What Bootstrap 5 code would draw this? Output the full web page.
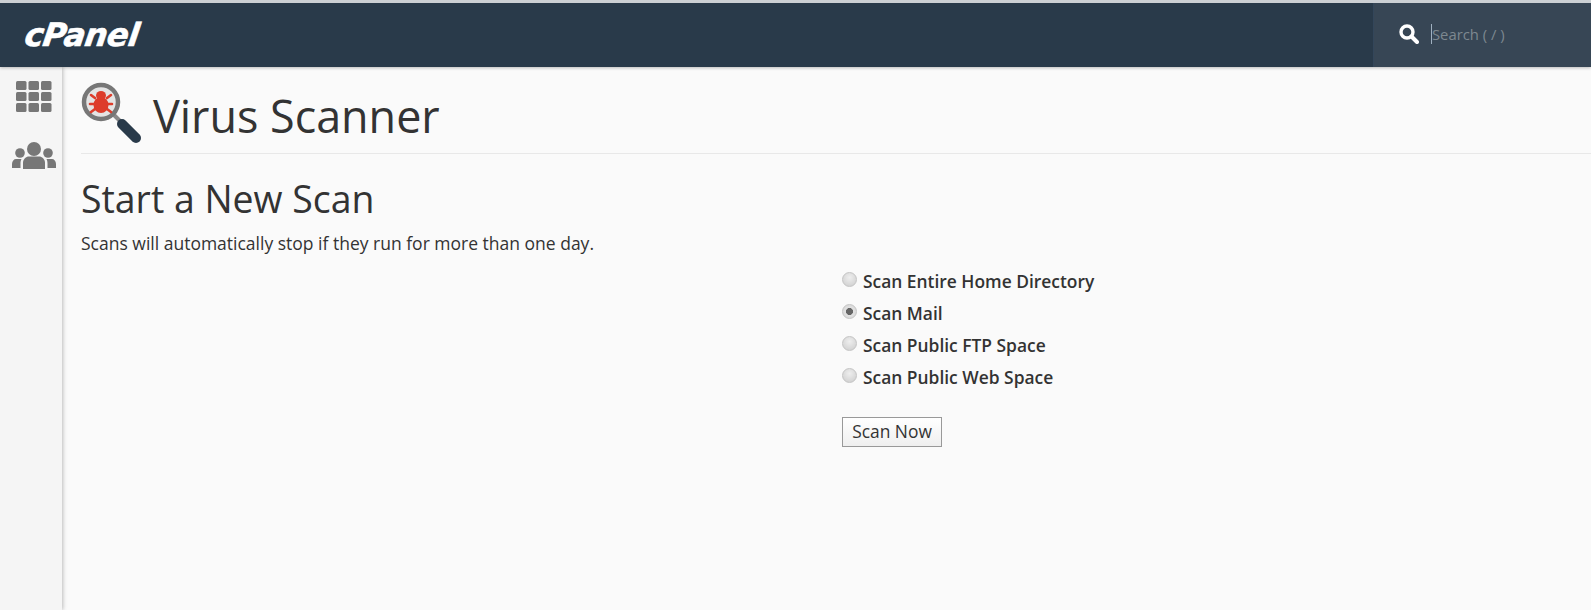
<!DOCTYPE html>
<html lang="en">
<head>
<meta charset="utf-8">
<title>Virus Scanner</title>
<link href="https://cdn.jsdelivr.net/npm/bootstrap@5.3.0/dist/css/bootstrap.min.css" rel="stylesheet">
<style>
html,body{height:100%;overflow:hidden}
body{background:#fafafa;color:#333;font-family:"Open Sans","Noto Sans",sans-serif;font-size:16px}
.topbar{height:67px;background:#293a4a;border-top:3px solid #ccd0d4;box-shadow:0 1px 3px rgba(0,0,0,.25);position:relative;z-index:2}
.brand-logo{font-family:"DejaVu Sans",sans-serif;font-weight:700;font-style:italic;font-size:32px;letter-spacing:-.6px;color:#fff;margin-left:25px;line-height:1;-webkit-text-stroke:.6px #fff;transform:skewX(-8deg)}
.search-box{width:218px;background:#374655;border-left:1px solid #33465a;padding:0 0 2px 25px;gap:12px}
.search-field{background:transparent;border:0;border-left:1px solid #9fb0c0;outline:0;color:#fff;font-size:14.8px;width:150px;height:20px;padding:0;font-family:"Open Sans",sans-serif}
.search-field::placeholder{color:#7d8890;opacity:1}
.page-wrap{height:calc(100% - 67px)}
.side-rail{width:62px;flex:none;background:#f5f5f5;box-shadow:1px 0 4px rgba(0,0,0,.25);padding:14px 0 0 6px;gap:30px}
.main-area{padding:15px 0 0 19px;min-width:0}
.page-head{border-bottom:1px solid #e8e8e8;height:72px;gap:11px}
.page-title{font-size:44.9px;font-weight:400;color:#333;margin:12px 0 0;line-height:1;font-family:"Open Sans",sans-serif}
.sub-title{font-size:37.4px;font-weight:400;color:#333;margin:23px 0 0;line-height:44px}
.intro-text{margin:10px 0 0;font-size:17.5px;line-height:24px;color:#333}
.scan-form{margin:10px 0 0 761px}
.scan-option{display:flex;align-items:center;height:32px;font-weight:600;font-size:17.4px;color:#333;margin:0;gap:6px}
.scan-option input{appearance:none;-webkit-appearance:none;width:15px;height:15px;margin:-4px 0 0;flex:none;border-radius:50%;border:1px solid #c4c4c4;background:radial-gradient(circle at 50% 35%,#eee,#ccc)}
.scan-option input:checked{background:radial-gradient(circle,#666 0,#666 3.2px,#e2e2e2 3.8px,#d4d4d4 100%)}
.scan-btn{margin-top:24px;height:30px;width:100px;padding:0 0 2px;border:1px solid #999;border-radius:0;background:linear-gradient(#fff,#efefef);color:#333;font-size:17.4px;line-height:24px;font-family:"Open Sans",sans-serif}
</style>
</head>
<body>
<header class="topbar d-flex justify-content-between align-items-stretch">
  <div class="brand-logo d-flex align-items-center">cPanel</div>
  <div class="search-box d-flex align-items-center">
    <svg width="20" height="20" viewBox="0 0 20 20" aria-hidden="true"><circle cx="8" cy="8" r="6" fill="none" stroke="#fff" stroke-width="3.400"/><path d="M12.500 12.500 18 18" stroke="#fff" stroke-width="4" stroke-linecap="round"/></svg>
    <input class="search-field" type="text" placeholder="Search ( / )" aria-label="Search">
  </div>
</header>
<div class="page-wrap d-flex">
  <nav class="side-rail d-flex flex-column align-items-center">
    <svg width="36" height="31" viewBox="0 0 36 31" aria-hidden="true"><g fill="#777"><rect x="0" y="0" width="10.500" height="9" rx="1.500"/><rect x="12.500" y="0" width="10.500" height="9" rx="1.500"/><rect x="25" y="0" width="10.500" height="9" rx="1.500"/><rect x="0" y="11" width="10.500" height="9" rx="1.500"/><rect x="12.500" y="11" width="10.500" height="9" rx="1.500"/><rect x="25" y="11" width="10.500" height="9" rx="1.500"/><rect x="0" y="22" width="10.500" height="9" rx="1.500"/><rect x="12.500" y="22" width="10.500" height="9" rx="1.500"/><rect x="25" y="22" width="10.500" height="9" rx="1.500"/></g></svg>
    <svg width="44" height="27" viewBox="0 0 44 27" aria-hidden="true"><g fill="#777"><circle cx="22" cy="7" r="7"/><circle cx="8" cy="11" r="4.800"/><circle cx="36" cy="11" r="4.800"/><path d="M11 27v-6c0-4 3-6.500 6-6.500h10c3 0 6 2.500 6 6.500v6z"/><path d="M0 26v-4c0-3 2-5 4-5h5.500c-.7 1.300-1 2.700-1 4.500V26z"/><path d="M44 26v-4c0-3-2-5-4-5h-5.500c.7 1.300 1 2.700 1 4.500V26z"/></g></svg>
  </nav>
  <main class="main-area flex-grow-1">
    <div class="page-head d-flex align-items-start">
      <svg width="61" height="61" viewBox="0 0 61 61" aria-hidden="true">
        <path d="M32 32 41 41" stroke="#8a8a8a" stroke-width="4"/>
        <path d="M41 42 55 56" stroke="#293a4a" stroke-width="10" stroke-linecap="round"/>
        <circle cx="20" cy="20" r="17" fill="#e4e4e4" stroke="#777" stroke-width="4.500"/>
        <g fill="#dd3c2b"><ellipse cx="20" cy="23" rx="7.500" ry="8"/><ellipse cx="20" cy="13.500" rx="5" ry="4.500"/></g>
        <g stroke="#dd3c2b" stroke-width="2.600" fill="none" stroke-linecap="round"><path d="M14 16 10 13M26 16l4-3M13 22H9M27 22h4M14 27l-4 3M26 27l4 3"/></g>
      </svg>
      <h1 class="page-title">Virus Scanner</h1>
    </div>
    <h2 class="sub-title">Start a New Scan</h2>
    <p class="intro-text">Scans will automatically stop if they run for more than one day.</p>
    <form class="scan-form">
      <label class="scan-option"><input type="radio" name="scan"> Scan Entire Home Directory</label>
      <label class="scan-option"><input type="radio" name="scan" checked> Scan Mail</label>
      <label class="scan-option"><input type="radio" name="scan"> Scan Public FTP Space</label>
      <label class="scan-option"><input type="radio" name="scan"> Scan Public Web Space</label>
      <button type="button" class="btn scan-btn">Scan Now</button>
    </form>
  </main>
</div>
<script src="https://cdn.jsdelivr.net/npm/bootstrap@5.3.0/dist/js/bootstrap.bundle.min.js"></script>
</body>
</html>
